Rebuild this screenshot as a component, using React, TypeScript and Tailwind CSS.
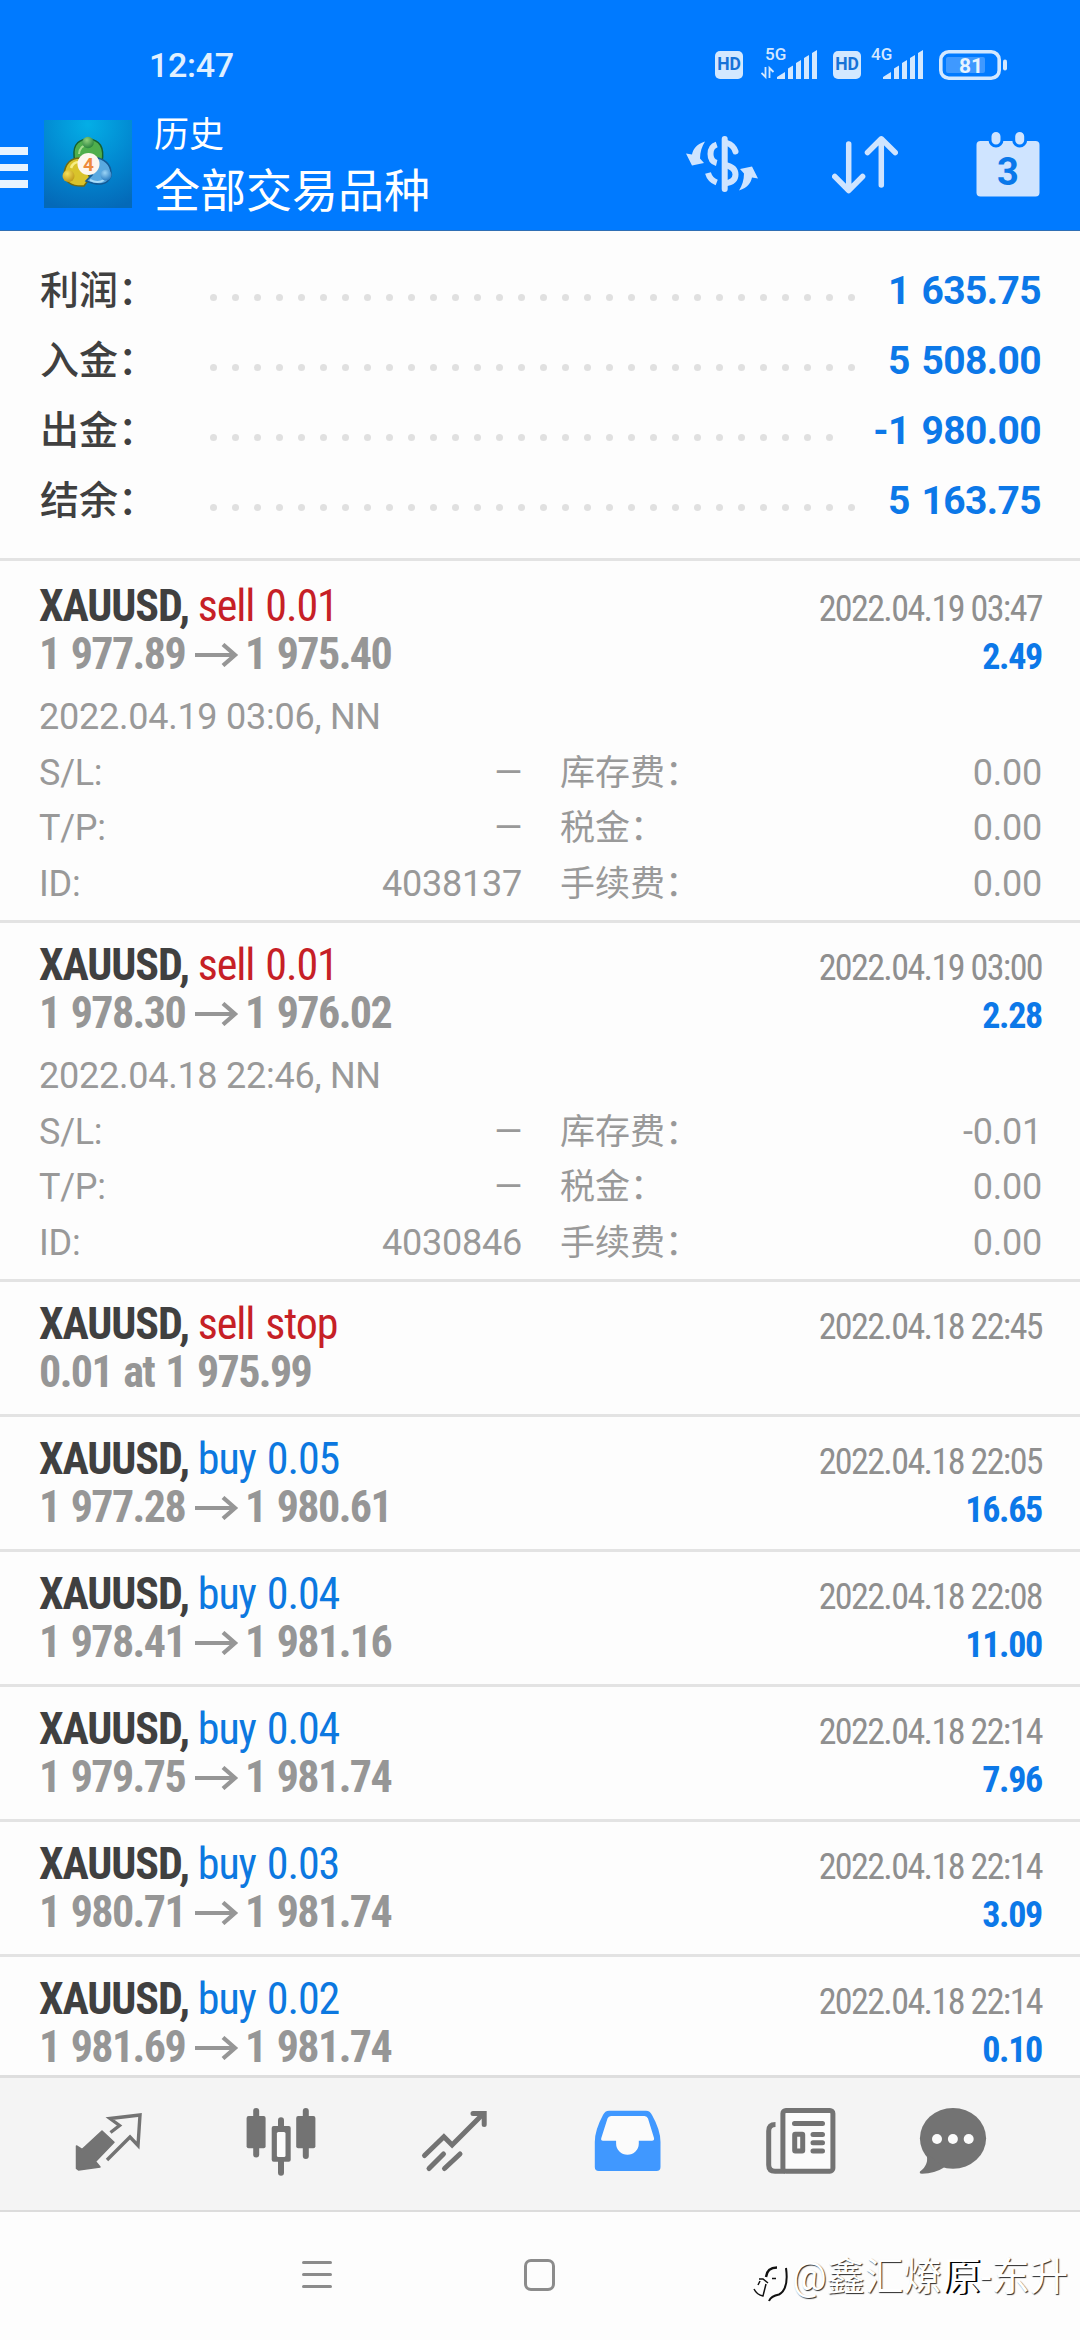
type Side = "buy" | "sell";

interface SummaryItem {
  label: string;
  value: string;
  dots: number;
}

interface TradeDetails {
  openedAt: string;
  id: string;
  swap: string;
  tax: string;
  commission: string;
}

interface Trade {
  side: Side;
  action: string;
  from: string;
  to?: string;
  closedAt: string;
  profit?: string;
  details?: TradeDetails;
}

const summary: SummaryItem[] = [
  { label: "利润：", value: "1 635.75", dots: 30 },
  { label: "入金：", value: "5 508.00", dots: 30 },
  { label: "出金：", value: "-1 980.00", dots: 29 },
  { label: "结余：", value: "5 163.75", dots: 30 },
];

const trades: Trade[] = [
  {
    side: "sell",
    action: "sell 0.01",
    from: "1 977.89",
    to: "1 975.40",
    closedAt: "2022.04.19 03:47",
    profit: "2.49",
    details: { openedAt: "2022.04.19 03:06, NN", id: "4038137", swap: "0.00", tax: "0.00", commission: "0.00" },
  },
  {
    side: "sell",
    action: "sell 0.01",
    from: "1 978.30",
    to: "1 976.02",
    closedAt: "2022.04.19 03:00",
    profit: "2.28",
    details: { openedAt: "2022.04.18 22:46, NN", id: "4030846", swap: "-0.01", tax: "0.00", commission: "0.00" },
  },
  { side: "sell", action: "sell stop", from: "0.01 at 1 975.99", closedAt: "2022.04.18 22:45" },
  { side: "buy", action: "buy 0.05", from: "1 977.28", to: "1 980.61", closedAt: "2022.04.18 22:05", profit: "16.65" },
  { side: "buy", action: "buy 0.04", from: "1 978.41", to: "1 981.16", closedAt: "2022.04.18 22:08", profit: "11.00" },
  { side: "buy", action: "buy 0.04", from: "1 979.75", to: "1 981.74", closedAt: "2022.04.18 22:14", profit: "7.96" },
  { side: "buy", action: "buy 0.03", from: "1 980.71", to: "1 981.74", closedAt: "2022.04.18 22:14", profit: "3.09" },
  { side: "buy", action: "buy 0.02", from: "1 981.69", to: "1 981.74", closedAt: "2022.04.18 22:14", profit: "0.10" },
];

const HdBadge = () => (
  <span className="flex h-7 w-7 items-center justify-center rounded-[5px] bg-[#d3e8ff] text-[17.500px] font-bold text-[#1673d8]">
    HD
  </span>
);

const Signal = ({ label, arrows }: { label: string; arrows?: boolean }) => (
  <svg width="56" height="42" viewBox="0 -8 56 42" fill="#d3e8ff">
    <text x="4" y="13.500" fontSize="17" fontWeight="500" fontFamily="Roboto, sans-serif">
      {label}
    </text>
    {arrows && (
      <path d="M4.500 21V31L0.500 27M8.500 32V22L12.500 26" fill="none" stroke="#d3e8ff" strokeWidth="1.800" />
    )}
    <path d="M16 33V31L24 26V33ZM27 33V22.500L32 19.500V33ZM35 33V17L40 14V33ZM43 33V12L48 9V33ZM51 33V7L56 4V33Z" />
  </svg>
);

const Battery = () => (
  <svg width="69" height="30" viewBox="0 0 69 30">
    <rect x="1.800" y="1.800" width="58.400" height="26.400" rx="8" fill="none" stroke="#d3e8ff" strokeWidth="3.600" />
    <rect x="7" y="7" width="39" height="16" rx="2" fill="#3f99ff" />
    <rect x="64" y="9.500" width="4" height="11" rx="2" fill="#d3e8ff" />
    <text x="32" y="23" textAnchor="middle" fontSize="21" fontWeight="700" fill="#e6f3ff" fontFamily="Roboto, sans-serif">
      81
    </text>
  </svg>
);

const StatusBar = () => (
  <div className="flex h-[110px] items-center pt-[19px] pl-[149px]">
    <span className="text-[34px] leading-[40px] font-medium tracking-[-0.300px] text-[#e0f0ff]">12:47</span>
    <div className="ml-auto flex items-center pr-[72px]">
      <HdBadge />
      <div className="ml-[18px] -mt-[11px]">
        <Signal label="5G" arrows />
      </div>
      <div className="ml-4">
        <HdBadge />
      </div>
      <div className="ml-[6px] -mt-[11px]">
        <Signal label="4G" />
      </div>
      <div className="ml-4">
        <Battery />
      </div>
    </div>
  </div>
);

const AppLogo = () => (
  <svg width="88" height="88" viewBox="0 0 88 88">
    <defs>
      <radialGradient id="logoBg" cx="0.5" cy="0.05" r="1">
        <stop offset="0" stopColor="#04aee6" />
        <stop offset="0.55" stopColor="#0287d0" />
        <stop offset="1" stopColor="#0469b8" />
      </radialGradient>
      <radialGradient id="logoGreen" cx="0.4" cy="0.3" r="0.8">
        <stop offset="0" stopColor="#8fd07c" />
        <stop offset="1" stopColor="#1c7a35" />
      </radialGradient>
      <radialGradient id="logoGold" cx="0.4" cy="0.3" r="0.8">
        <stop offset="0" stopColor="#f4e05a" />
        <stop offset="1" stopColor="#b98f10" />
      </radialGradient>
      <radialGradient id="logoBlue" cx="0.4" cy="0.3" r="0.8">
        <stop offset="0" stopColor="#9ad4f6" />
        <stop offset="1" stopColor="#1f74bd" />
      </radialGradient>
    </defs>
    <rect width="88" height="88" fill="url(#logoBg)" />
    <path d="M31 42Q26 20 44 19Q62 20 58 42Z" fill="#4fae4c" stroke="#17612f" strokeWidth="1.500" />
    <path d="M35 34Q36 25 44 25" fill="none" stroke="#a6dc8e" strokeWidth="2" />
    <path d="M36 38Q22 38 20 54Q22 67 40 66L46 58Z" fill="#d9c32b" stroke="#6f6a13" strokeWidth="1.500" />
    <path d="M27 48Q29 42 35 42" fill="none" stroke="#f7ee84" strokeWidth="2.500" />
    <path d="M54 38Q68 42 67 56Q62 69 42 61L48 55Z" fill="#5aa9e0" stroke="#155a94" strokeWidth="1.500" />
    <path d="M46 60Q54 64 60 60" fill="none" stroke="#a9dcf8" strokeWidth="2" />
    <circle cx="44" cy="22.500" r="5.800" fill="url(#logoGreen)" />
    <circle cx="24.500" cy="56" r="6" fill="url(#logoGold)" />
    <circle cx="62" cy="55" r="5.500" fill="url(#logoBlue)" />
    <circle cx="44.500" cy="44" r="11" fill="#fdf6ee" />
    <text x="44.500" y="50.500" textAnchor="middle" fontSize="19" fontWeight="700" fill="#ee8a3c" fontFamily="Roboto, sans-serif">
      4
    </text>
  </svg>
);

const swapArrow = "M19 10.500C10 13.500 7 18.500 6 23.500L0 22.500L6 34.500L18 32L14 27.500C14 21 16 15 19 10.500Z";

const CurrencyIcon = () => (
  <svg width="72" height="66" viewBox="0 0 72 66" fill="none" stroke="#cfe4ff" strokeWidth="6">
    <path d="M38.700 8V58" strokeLinecap="round" />
    <path d="M30.700 13.500Q24.500 15.500 24.500 23T30.700 32" />
    <path d="M22 42Q24 49 30.700 51.500" />
    <path d="M41 12Q47.500 14 49.500 20.500" strokeLinecap="round" />
    <path d="M39 34Q49.500 36 49.500 43.500T39 52.500" />
    <g fill="#cfe4ff" stroke="none">
      <path d={swapArrow} />
      <path d={swapArrow} transform="rotate(180 36 35)" />
    </g>
  </svg>
);

const SortIcon = () => (
  <svg width="66" height="66" viewBox="0 0 66 66" fill="none" stroke="#cfe4ff" strokeWidth="5.500" strokeLinecap="round" strokeLinejoin="round">
    <path d="M16.700 13V59M2.800 45.500L16.700 59.500L30.600 45.500" />
    <path d="M49.300 54V8M35.500 21.500L49.300 7.800L63.200 21.500" />
  </svg>
);

const CalendarIcon = () => (
  <svg width="64" height="66" viewBox="0 0 64 66">
    <rect x="0.500" y="10" width="63" height="55.500" rx="4" fill="#cfe4ff" />
    <g fill="#cfe4ff" stroke="#007aff" strokeWidth="3">
      <rect x="14" y="-0.500" width="12" height="15.500" rx="6" />
      <rect x="37.700" y="-0.500" width="12" height="15.500" rx="6" />
    </g>
    <text x="32" y="53.500" textAnchor="middle" fontSize="38" fontWeight="700" fill="#0a78ea" fontFamily="Roboto, sans-serif">
      3
    </text>
  </svg>
);

const AppBar = () => (
  <div className="flex h-[121px] items-start border-b border-[#2f6fb5]">
    <div className="mt-[37px] flex w-7 flex-col gap-[9px]">
      <span className="h-[7.500px] bg-[#e8f4ff]" />
      <span className="h-[7.500px] bg-[#e8f4ff]" />
      <span className="h-[7.500px] bg-[#e8f4ff]" />
    </div>
    <div className="mt-[10px] ml-4">
      <AppLogo />
    </div>
    <div className="mt-px ml-[22px] text-white">
      <div className="text-[35px] leading-[50px]">历史</div>
      <div className="text-[46px] leading-[60px]">全部交易品种</div>
    </div>
    <div className="mt-[21px] ml-auto flex pr-10">
      <CurrencyIcon />
      <div className="ml-[74px]">
        <SortIcon />
      </div>
      <div className="ml-[78px]">
        <CalendarIcon />
      </div>
    </div>
  </div>
);

const SummaryRow = ({ label, value, dots }: SummaryItem) => (
  <div className="flex h-[70px] items-start text-[39px] leading-[70px]">
    <span className="w-[170px] font-medium whitespace-nowrap text-[#404040]">{label}</span>
    <div className="mt-[38px] flex gap-[15px]">
      {Array.from({ length: dots }, (_, i) => (
        <span key={i} className="h-[7px] w-[7px] rounded-full bg-[#e0e0e0]" />
      ))}
    </div>
    <span className="ml-auto font-bold tracking-[-0.600px] text-[#0c78e8] [word-spacing:2.500px]">{value}</span>
  </div>
);

const PriceArrow = () => (
  <svg className="mr-[6px] ml-[10px] mt-[13px]" width="44" height="24" viewBox="0 0 44 24" fill="none" stroke="#969696" strokeWidth="4.200">
    <path d="M0 12H40M28 1.500L40 12L28 22.500" />
  </svg>
);

const DetailRow = ({ left, leftValue, right, rightValue }: { left: string; leftValue: string; right: string; rightValue: string }) => (
  <div className="flex h-[55.500px] whitespace-nowrap">
    <span>{left}</span>
    <span className="ml-auto">{leftValue}</span>
    <div className="ml-[38px] flex w-[482px] justify-between">
      <span className="text-[35px] tracking-normal">{right}</span>
      <span>{rightValue}</span>
    </div>
  </div>
);

const TradeRow = ({ trade }: { trade: Trade }) => {
  const { side, action, from, to, closedAt, profit, details } = trade;

  return (
    <article className="border-b-[3px] border-[#e3e3e3] pr-[38px] pb-[18px] pl-[39px] first:pt-[21px] pt-[18px]">
      <div className="font-['Roboto_Condensed',Roboto,sans-serif] text-[44px] leading-[48px] whitespace-nowrap">
        <div className="flex h-12 items-baseline justify-between">
          <div className="tracking-[-1.100px]">
            <span className="font-bold text-[#404040]">XAUUSD,</span>{" "}
            <span className={side === "sell" ? "text-[#c62026] [word-spacing:2px]" : "text-[#0c78e0] [word-spacing:2px]"}>{action}</span>
          </div>
          <span className="text-[36px] tracking-[-1.600px] text-[#8f8f8f]">{closedAt}</span>
        </div>
        <div className="flex h-12 items-baseline justify-between">
          <div className="flex font-bold tracking-[-1.600px] text-[#969696] [word-spacing:2.500px]">
            <span>{from}</span>
            {to && <PriceArrow />}
            {to && <span>{to}</span>}
          </div>
          {profit && <span className="text-[36px] font-bold tracking-[-1.300px] text-[#0c78e8]">{profit}</span>}
        </div>
      </div>
      {details && (
        <div className="mt-3 -mb-[10px] text-[36px] leading-[55.500px] tracking-[-0.250px] text-[#999999]">
          <div className="h-[55.500px]">{details.openedAt}</div>
          <DetailRow left="S/L:" leftValue="—" right="库存费：" rightValue={details.swap} />
          <DetailRow left="T/P:" leftValue="—" right="税金：" rightValue={details.tax} />
          <DetailRow left="ID:" leftValue={details.id} right="手续费：" rightValue={details.commission} />
        </div>
      )}
    </article>
  );
};

const TabBar = () => (
  <nav className="flex h-[137px] shrink-0 gap-[101px] border-t-[3px] border-b-2 border-t-[#dedede] border-b-[#dcdcdc] bg-[#f4f4f4] pt-7 pl-[72px] text-[#737373]">
    {/* Quotes */}
    <svg className="shrink-0" width="72" height="72" viewBox="0 0 72 72" fill="none" stroke="currentColor" strokeLinejoin="round">
      <path d="M4.500 40L10 43.500L30 25L42 36.300L23.500 55.500L28 61L6.500 64L4.500 62.500Z" fill="currentColor" strokeWidth="1.500" />
      <path d="M38.500 26.500L47.500 19.500L38 12.500L68 9L66 39.500L58 31L35 54" strokeWidth="3.400" strokeLinejoin="miter" />
    </svg>
    {/* Charts */}
    <svg className="shrink-0" width="72" height="72" viewBox="0 0 72 72" fill="currentColor">
      <rect x="8.200" y="2" width="6" height="49.500" rx="3" />
      <rect x="1.600" y="10" width="19" height="32.300" rx="2" />
      <rect x="33" y="11.300" width="6" height="58.400" rx="3" />
      <rect x="26.700" y="20" width="19" height="35.700" rx="2" />
      <rect x="31.900" y="26" width="8.600" height="25" rx="1.500" fill="#fbfbfb" />
      <rect x="57.800" y="2" width="6" height="51" rx="3" />
      <rect x="51.200" y="10" width="19.200" height="32.300" rx="2" />
    </svg>
    {/* Trade */}
    <svg className="shrink-0" width="72" height="72" viewBox="0 0 72 72" fill="none" stroke="currentColor" strokeWidth="5" strokeLinecap="round">
      <path d="M6.500 49.500L25.900 30.800L34.100 39L65 8" strokeLinejoin="miter" />
      <path d="M55 7.500H66.200V18.500" />
      <path d="M11 62.500L25.500 48M26.500 62.500L42 48" />
    </svg>
    {/* History */}
    <svg className="ml-px shrink-0" width="72" height="72" viewBox="0 0 72 72" fill="#4098ff">
      <path d="M17 4.700H54Q58 4.700 60 9Q68.500 24 68.500 36V61Q68.500 65 64.500 65H6.800Q2.800 65 2.800 61V36Q2.800 24 11 9Q13 4.700 17 4.700Z" />
      <path
        d="M19 10H52.500Q55 10 56 12.500L62 32Q62.500 34.700 60 34.700H46.800V37.500A11.350 11.350 0 0 1 24.100 37.500V34.700H11Q8.500 34.700 9.300 32L15.500 12.500Q16.500 10 19 10Z"
        fill="#fbfbfb"
      />
    </svg>
    {/* News */}
    <svg className="shrink-0" width="72" height="72" viewBox="0 0 72 72" fill="none" stroke="currentColor" strokeWidth="5">
      <rect x="17.900" y="4.500" width="50" height="60.700" rx="3" fill="#fbfbfb" />
      <path d="M10.500 18.500Q3.700 18.500 3.700 25V59Q3.700 65.200 10 65.200H20" />
      <path d="M29.500 17.500H57.500M48 28.500H57.500M48 36.700H57.500M48 45H57.500" strokeLinecap="round" />
      <rect x="29.700" y="28.300" width="8" height="16.700" rx="0.500" />
    </svg>
    {/* Chat */}
    <svg className="-ml-[21px] shrink-0" width="72" height="72" viewBox="0 0 72 72" fill="currentColor">
      <ellipse cx="36" cy="32.300" rx="33.100" ry="30.400" />
      <path d="M9 47Q13 58 3 65.500Q2 67.700 5 67.700Q18 67.500 27 61.500Z" />
      <g fill="#fbfbfb">
        <circle cx="20" cy="33" r="5" />
        <circle cx="35.900" cy="33" r="5" />
        <circle cx="51.700" cy="33" r="5" />
      </g>
    </svg>
  </nav>
);

const SystemNav = () => (
  <div className="flex h-32 shrink-0 items-start pl-[302px]">
    <div className="mt-[49px] flex w-[30px] flex-col gap-[9px]">
      <span className="h-[3px] rounded-full bg-[#8c8c8c]" />
      <span className="h-[3px] rounded-full bg-[#8c8c8c]" />
      <span className="h-[3px] rounded-full bg-[#8c8c8c]" />
    </div>
    <div className="mt-[47px] ml-[192px] h-8 w-[31px] rounded-[7px] border-3 border-[#8c8c8c]" />
    <div className="ml-[195px] flex items-start pt-[43px]">
      <svg width="42" height="48" viewBox="0 0 42 48" fill="none" stroke="#111" strokeWidth="2">
        <path d="M36 13Q39 34 29 39.500Q21 41 19 46" />
        <path d="M16 22Q17 12.500 27 12.500" strokeWidth="2.400" />
        <path d="M22 23.500H26M9 24H13L18 28M10 26L8 30M4 34Q7 40 13 41L16 29" strokeWidth="1.500" />
      </svg>
      <span className="-mt-[2px] text-[38.500px] leading-[48px] whitespace-nowrap text-white [text-shadow:1px_1px_1px_#2a2a2a]">
        @鑫汇燎<span className="[text-shadow:2px_1px_0_#000]">原</span>-东升
      </span>
    </div>
  </div>
);

export default function App() {
  return (
    <main className="flex h-[2340px] w-[1080px] flex-col overflow-hidden bg-[#fdfdfd] font-[Roboto,'Noto_Sans_CJK_SC',sans-serif]">
      <header className="h-[231px] shrink-0 bg-[#007aff]">
        <StatusBar />
        <AppBar />
      </header>
      <section className="shrink-0 border-b-[3px] border-[#e3e3e3] pt-[25px] pr-[39px] pb-[22px] pl-10">
        {summary.map((item) => (
          <SummaryRow key={item.label} {...item} />
        ))}
      </section>
      <section className="min-h-0 flex-1 overflow-hidden">
        {trades.map((trade) => (
          <TradeRow key={trade.from} trade={trade} />
        ))}
      </section>
      <TabBar />
      <SystemNav />
    </main>
  );
}
